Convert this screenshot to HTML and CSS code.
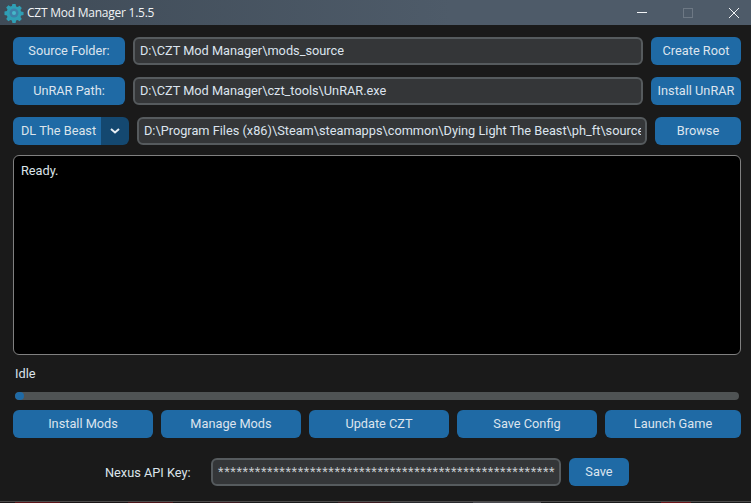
FILE: index.html
```html
<!DOCTYPE html>
<html lang="en">
<head>
<meta charset="utf-8">
<title>CZT Mod Manager 1.5.5</title>
<link rel="stylesheet" href="styles.css">
</head>
<body>
<div class="window">
  <header class="titlebar">
    <svg class="app-icon" width="20" height="20" viewBox="0 0 20 20">
      <path fill="#2f9fb5" d="M8.4 1h3.2l.5 2.4 1.5.6 2-1.3 2.2 2.2-1.3 2 .6 1.5 2.4.5v3.2l-2.4.5-.6 1.5 1.3 2-2.2 2.2-2-1.3-1.500.6-.5 2.400H8.400l-.5-2.400-1.500-.6-2 1.300-2.200-2.200 1.300-2-.6-1.500-2.400-.5V8.400l2.400-.5.6-1.500-1.300-2 2.200-2.200 2 1.300 1.500-.6z"/>
      <circle cx="10" cy="10" r="4.500" fill="#3d7fa8"/>
      <circle cx="10" cy="10" r="2" fill="#45b7c9"/>
    </svg>
    <span class="app-title">CZT Mod Manager 1.5.5</span>
    <div class="win-controls">
      <svg class="ctl ctl-min" width="10" height="10" viewBox="0 0 10 10"><path d="M0 4.500h10" stroke="#f2f4f6" stroke-width="1"/></svg>
      <svg class="ctl ctl-max" width="10" height="10" viewBox="0 0 10 10"><rect x=".5" y=".5" width="9" height="9" fill="none" stroke="#6d7884"/></svg>
      <svg class="ctl ctl-close" width="10" height="10" viewBox="0 0 10 10"><path d="M0 0l10 10M10 0L0 10" stroke="#f2f4f6" stroke-width="1"/></svg>
    </div>
  </header>
  <main class="content">
    <div class="row">
      <button class="btn w-label">Source Folder:</button>
      <div class="entry grow">D:\CZT Mod Manager\mods_source</div>
      <button class="btn w-side">Create Root</button>
    </div>
    <div class="row">
      <button class="btn w-label">UnRAR Path:</button>
      <div class="entry grow">D:\CZT Mod Manager\czt_tools\UnRAR.exe</div>
      <button class="btn w-side">Install UnRAR</button>
    </div>
    <div class="row">
      <div class="combo">
        <span class="combo-text">DL The Beast</span>
        <span class="combo-arrow">
          <svg width="10" height="6" viewBox="0 0 10 6"><path d="M1 1l4 3.500L9 1" fill="none" stroke="#e8eef4" stroke-width="2"/></svg>
        </span>
      </div>
      <div class="entry grow"><span class="entry-clip">D:\Program Files (x86)\Steam\steamapps\common\Dying Light The Beast\ph_ft\source</span></div>
      <button class="btn w-browse">Browse</button>
    </div>
    <div class="log">Ready.</div>
    <div class="status">Idle</div>
    <div class="progress"><div class="progress-fill"></div></div>
    <div class="actions">
      <button class="btn act">Install Mods</button>
      <button class="btn act">Manage Mods</button>
      <button class="btn act">Update CZT</button>
      <button class="btn act">Save Config</button>
      <button class="btn act">Launch Game</button>
    </div>
    <div class="api-row">
      <span class="api-label">Nexus API Key:</span>
      <div class="entry api-entry">*******************************************************</div>
      <button class="btn w-save">Save</button>
    </div>
  </main>
  <div class="wallpaper"></div>
</div>
</body>
</html>
```
FILE: styles.css
```css
* { box-sizing: border-box; }
html, body { margin: 0; height: 100%; }
body { background: #1a1a1a; font-family: Roboto, "Liberation Sans", sans-serif; font-size: 12.75px; color: #dce4ea; overflow: hidden; }
.window { width: 751px; height: 503px; display: flex; flex-direction: column; background: #1a1a1a; }
.titlebar { height: 25px; flex: none; display: flex; align-items: center; padding-left: 4px; background: linear-gradient(90deg, #3f4b57, #4e5b69 60%, #4e5b69); color: #f0f3f5; font-family: "Open Sans", "Liberation Sans", sans-serif; font-size: 12px; letter-spacing: -.24px; }
.app-icon { flex: none; }
.app-title { margin-left: 3px; }
.win-controls { margin-left: auto; display: flex; align-items: center; }
.ctl { flex: none; }
.ctl-min { margin-right: 36px; }
.ctl-max { margin-right: 36px; }
.ctl-close { margin-right: 12px; }
.content { flex: 1; display: flex; flex-direction: column; padding: 12px 10px 0 13px; }
.row { display: flex; gap: 8px; height: 28px; margin-bottom: 12px; }
.row:nth-child(3) { margin-bottom: 10px; }
.btn { height: 28px; border: 0; border-radius: 6px; background: #1f6aa5; color: #dce4ee; font: inherit; padding: 0 0 1px; white-space: nowrap; }
.w-label { width: 112px; flex: none; }
.w-side { width: 90px; flex: none; }
.w-browse { width: 86px; flex: none; }
.w-save { width: 60px; flex: none; }
.entry { height: 28px; border: 2px solid #565b5e; border-radius: 6px; background: #343638; color: #dce4ee; line-height: 24px; padding: 0 4px 0 5px; white-space: nowrap; overflow: hidden; }
.entry-clip { display: block; overflow: hidden; }
.grow { flex: 1; min-width: 0; }
.combo { width: 116px; flex: none; display: flex; height: 28px; border-radius: 6px; overflow: hidden; }
.combo-text { width: 88px; background: #1f6aa5; line-height: 27px; padding-left: 8px; white-space: nowrap; }
.combo-arrow { flex: 1; background: #144870; display: flex; align-items: center; justify-content: center; }
.log { height: 200px; flex: none; background: #000; border: 1px solid #808080; border-radius: 6px; padding: 7px 7px; }
.status { height: 18px; margin: 10px 0 0 2px; line-height: 18px; }
.progress { height: 8px; margin: 9px 2px 0; border-radius: 4px; background: #4f5354; overflow: hidden; }
.progress-fill { width: 9px; height: 8px; border-radius: 4px; background: #1f6aa5; }
.actions { display: flex; gap: 8px; margin-top: 10px; }
.act { flex: none; width: 140px; }
.act:last-child { width: 136px; }
.api-row { display: flex; align-items: center; margin-top: 20px; padding-left: 92px; }
.api-label { width: 106px; flex: none; }
.api-entry { width: 350px; flex: none; margin-right: 8px; padding: 0 5px; line-height: 23px; letter-spacing: .64px; color: #c4c9cd; }
.wallpaper { height: 2px; flex: none; border-top: 1px solid #4c4c4c; background: linear-gradient(90deg, #1a1416 0 2%, #5a1418 2% 8%, #1a1416 8% 17%, #4a1418 17% 23%, #1a1416 23% 28%, #3a1a20 28% 32%, #1a1a1c 32% 45%, #3a1a20 45% 52%, #2a2a2e 52% 63%, #4a4a50 63% 72%, #1a1a1c 72% 88%, #6a1418 88% 92%, #1a1a1c 92% 100%); }
```
